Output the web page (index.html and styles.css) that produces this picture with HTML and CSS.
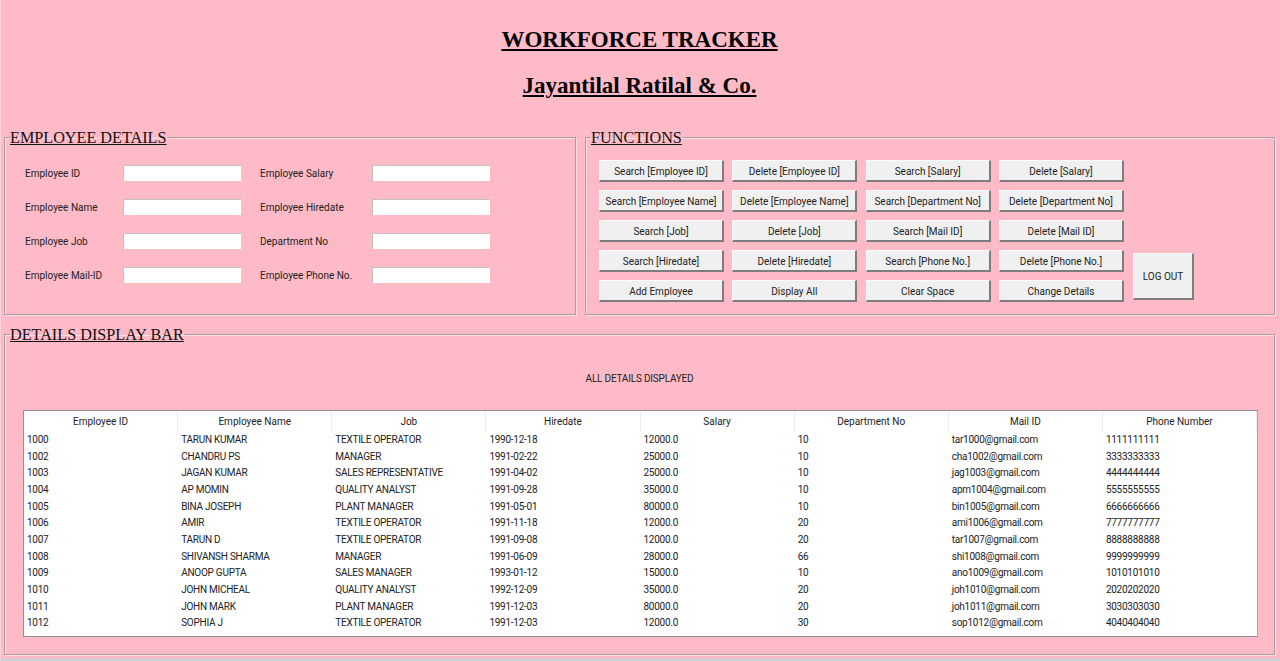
FILE: index.html
```html
<!DOCTYPE html>
<html lang="en">
<head>
<meta charset="utf-8">
<title>Workforce Tracker</title>
<link rel="stylesheet" href="styles.css">
</head>
<body>
<div class="window">
  <header class="titles">
    <h1>WORKFORCE TRACKER</h1>
    <h2>Jayantilal Ratilal &amp; Co.</h2>
  </header>
  <div class="top-row">
    <fieldset class="group details">
      <legend>EMPLOYEE DETAILS</legend>
      <div class="form">
        <label class="lbl">Employee ID</label><input class="field" type="text"><label class="lbl">Employee Salary</label><input class="field" type="text">
        <label class="lbl">Employee Name</label><input class="field" type="text"><label class="lbl">Employee Hiredate</label><input class="field" type="text">
        <label class="lbl">Employee Job</label><input class="field" type="text"><label class="lbl">Department No</label><input class="field" type="text">
        <label class="lbl">Employee Mail-ID</label><input class="field" type="text"><label class="lbl">Employee Phone No.</label><input class="field" type="text">
      </div>
    </fieldset>
    <fieldset class="group functions">
      <legend>FUNCTIONS</legend>
      <div class="buttons">
        <button class="btn">Search [Employee ID]</button><button class="btn">Delete [Employee ID]</button><button class="btn">Search [Salary]</button><button class="btn">Delete [Salary]</button>
        <button class="btn">Search [Employee Name]</button><button class="btn">Delete [Employee Name]</button><button class="btn">Search [Department No]</button><button class="btn">Delete [Department No]</button>
        <button class="btn">Search [Job]</button><button class="btn">Delete [Job]</button><button class="btn">Search [Mail ID]</button><button class="btn">Delete [Mail ID]</button>
        <button class="btn">Search [Hiredate]</button><button class="btn">Delete [Hiredate]</button><button class="btn">Search [Phone No.]</button><button class="btn">Delete [Phone No.]</button>
        <button class="btn">Add Employee</button><button class="btn">Display All</button><button class="btn">Clear Space</button><button class="btn">Change Details</button>
        <button class="btn logout">LOG OUT</button>
      </div>
    </fieldset>
  </div>
  <fieldset class="group display">
    <legend>DETAILS DISPLAY BAR</legend>
    <p class="status">ALL DETAILS DISPLAYED</p>
    <div class="table-box">
      <div class="row head"><span>Employee ID</span><span>Employee Name</span><span>Job</span><span>Hiredate</span><span>Salary</span><span>Department No</span><span>Mail ID</span><span>Phone Number</span></div>
      <div class="row"><span>1000</span><span>TARUN KUMAR</span><span>TEXTILE OPERATOR</span><span>1990-12-18</span><span>12000.0</span><span>10</span><span>tar1000@gmail.com</span><span>1111111111</span></div>
      <div class="row"><span>1002</span><span>CHANDRU PS</span><span>MANAGER</span><span>1991-02-22</span><span>25000.0</span><span>10</span><span>cha1002@gmail.com</span><span>3333333333</span></div>
      <div class="row"><span>1003</span><span>JAGAN KUMAR</span><span>SALES REPRESENTATIVE</span><span>1991-04-02</span><span>25000.0</span><span>10</span><span>jag1003@gmail.com</span><span>4444444444</span></div>
      <div class="row"><span>1004</span><span>AP MOMIN</span><span>QUALITY ANALYST</span><span>1991-09-28</span><span>35000.0</span><span>10</span><span>apm1004@gmail.com</span><span>5555555555</span></div>
      <div class="row"><span>1005</span><span>BINA JOSEPH</span><span>PLANT MANAGER</span><span>1991-05-01</span><span>80000.0</span><span>10</span><span>bin1005@gmail.com</span><span>6666666666</span></div>
      <div class="row"><span>1006</span><span>AMIR</span><span>TEXTILE OPERATOR</span><span>1991-11-18</span><span>12000.0</span><span>20</span><span>ami1006@gmail.com</span><span>7777777777</span></div>
      <div class="row"><span>1007</span><span>TARUN D</span><span>TEXTILE OPERATOR</span><span>1991-09-08</span><span>12000.0</span><span>20</span><span>tar1007@gmail.com</span><span>8888888888</span></div>
      <div class="row"><span>1008</span><span>SHIVANSH SHARMA</span><span>MANAGER</span><span>1991-06-09</span><span>28000.0</span><span>66</span><span>shi1008@gmail.com</span><span>9999999999</span></div>
      <div class="row"><span>1009</span><span>ANOOP GUPTA</span><span>SALES MANAGER</span><span>1993-01-12</span><span>15000.0</span><span>10</span><span>ano1009@gmail.com</span><span>1010101010</span></div>
      <div class="row"><span>1010</span><span>JOHN MICHEAL</span><span>QUALITY ANALYST</span><span>1992-12-09</span><span>35000.0</span><span>20</span><span>joh1010@gmail.com</span><span>2020202020</span></div>
      <div class="row"><span>1011</span><span>JOHN MARK</span><span>PLANT MANAGER</span><span>1991-12-03</span><span>80000.0</span><span>20</span><span>joh1011@gmail.com</span><span>3030303030</span></div>
      <div class="row"><span>1012</span><span>SOPHIA J</span><span>TEXTILE OPERATOR</span><span>1991-12-03</span><span>12000.0</span><span>30</span><span>sop1012@gmail.com</span><span>4040404040</span></div>
    </div>
  </fieldset>
</div>
</body>
</html>
```
FILE: styles.css
```css
* { box-sizing: border-box; }
html, body { margin: 0; height: 100%; overflow: hidden; }
body {
  background: #ffbac7;
  font-family: Roboto, sans-serif;
  font-size: 10px;
  color: #222;
}
.window {
  height: 661px;
  padding: 0 5px 0 3px;
  border-left: 1px solid #ffd0d9;
  border-bottom: 2px solid #c3d6dc;
}
.titles { height: 127px; padding-top: 25px; text-align: center; color: #000; font-family: "Liberation Serif", serif; }
.titles h1 { margin: 0; font-size: 23px; line-height: 30px; text-decoration: underline; }
.titles h2 { margin: 16px 0 0; font-size: 23px; line-height: 30px; text-decoration: underline; }
.top-row { display: flex; gap: 9px; }
.group {
  margin: 0;
  padding: 0;
  min-width: 0;
  border: 1px solid #a99ea3;
  box-shadow: 1px 1px 0 #ffdbe2, inset 1px 1px 0 #ffdbe2;
}
.group legend {
  margin-left: 5px;
  padding: 2px 0 0;
  font-family: "Liberation Serif", serif;
  font-size: 16.2px;
  line-height: 18px;
  color: #111;
  text-decoration: underline;
}
.details { width: 572px; height: 188px; }
.functions { width: 690px; height: 188px; }
.form {
  display: grid;
  grid-template-columns: 98px 118px 131px 118px;
  grid-auto-rows: 16px;
  row-gap: 18px;
  padding: 18px 0 0 20px;
  align-items: center;
}
.lbl { white-space: nowrap; }
.lbl:nth-child(4n+3) { padding-left: 19px; }
.field {
  width: 118px;
  height: 16px;
  padding: 0;
  background: #fff;
  border: 0;
  border-top: 1px solid #c4c0c0;
  border-left: 1px solid #c4c0c0;
}
.buttons {
  position: relative;
  display: grid;
  grid-template-columns: repeat(4, 125px);
  grid-auto-rows: 22px;
  column-gap: 8.33px;
  row-gap: 8px;
  padding: 13px 0 0 13px;
}
.btn {
  margin: 0;
  padding: 1px 0 0;
  font: inherit;
  color: #222;
  background: #f0f0f0;
  border: 0;
  border-top: 1px solid #fbfbfb;
  border-left: 1px solid #fbfbfb;
  border-right: 2px solid #7d7d7d;
  border-bottom: 2px solid #7d7d7d;
  white-space: nowrap;
}
.logout {
  position: absolute;
  left: 547px;
  top: 106px;
  width: 61px;
  height: 47px;
}
.display { display: block; height: 331px; margin-top: 9px; }
.status { margin: 27px 0 0; height: 15px; line-height: 15px; text-align: center; letter-spacing: -0.2px; }
.table-box {
  margin: 24px 16px 0 18px;
  height: 227px;
  background: #fff;
  border: 1px solid #8f8f94;
  border-right-color: #a9a9ae;
}
.row {
  display: grid;
  grid-template-columns: repeat(8, 1fr);
  height: 16.67px;
  line-height: 16.67px;
  letter-spacing: -0.25px;
  white-space: nowrap;
}
.row span { padding-left: 3px; }
.head { height: 21px; line-height: 21px; letter-spacing: 0; }
.head span { padding: 0; text-align: center; border-right: 1px solid #ececec; }
```
